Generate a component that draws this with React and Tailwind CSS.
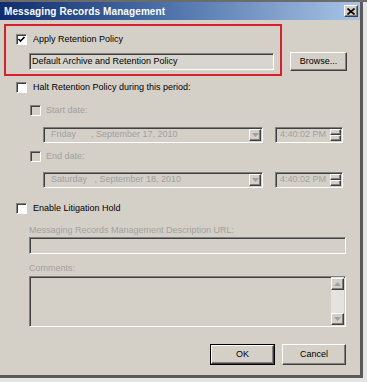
import React from "react";

// Windows-classic "Messaging Records Management" dialog
const FONT = { fontFamily: '"Liberation Sans", Arial, sans-serif' };

function Check({ checked, disabled }) {
  return (
    <span
      className={`relative inline-block w-[11px] h-[11px] shrink-0 border-t border-l border-[#808080] border-b border-r border-b-white border-r-white shadow-[inset_1px_1px_0_#404040] ${disabled ? "bg-[#d4d0c8]" : "bg-white"}`}
    >
      {checked && (
        <svg viewBox="0 0 9 9" className="absolute left-0 top-0 w-[9px] h-[9px]">
          <path d="M1.5 4 L3.5 6 L7.5 2" stroke="#000" strokeWidth="1.6" fill="none" />
        </svg>
      )}
    </span>
  );
}

function Sunken({ className = "", children }) {
  return (
    <div
      className={`border-t border-l border-[#808080] border-b border-r border-b-white border-r-white shadow-[inset_1px_1px_0_#404040] bg-[#d4d0c8] ${className}`}
    >
      {children}
    </div>
  );
}

function Raised({ className = "", children }) {
  return (
    <div
      className={`flex items-center justify-center border-t border-l border-white border-b border-r border-b-[#404040] border-r-[#404040] shadow-[inset_-1px_-1px_0_#808080] bg-[#d4d0c8] ${className}`}
    >
      {children}
    </div>
  );
}

function Arrow({ dir = "down" }) {
  return (
    <svg viewBox="0 0 7 4" className="w-[7px] h-[4px]">
      <path d={dir === "down" ? "M0 0 L7 0 L3.5 4 Z" : "M0 4 L7 4 L3.5 0 Z"} fill="#a0a0a0" />
    </svg>
  );
}

function DateRow({ day }) {
  return (
    <div className="flex items-center ml-[43px] gap-[12px]">
      <Sunken className="w-[220px] h-[16px] flex items-center">
        <span className="flex-1 pl-[7px] text-[#a0a0a0] whitespace-pre">{day}</span>
        <Raised className="w-[12px] h-[12px] mr-[1px]">
          <Arrow />
        </Raised>
      </Sunken>
      <Sunken className="w-[68px] h-[16px] flex items-center">
        <span className="flex-1 pl-[4px] text-[#a0a0a0]">4:40:02 PM</span>
        <div className="flex flex-col mr-[1px]">
          <Raised className="w-[11px] h-[6px]" />
          <Raised className="w-[11px] h-[6px]" />
        </div>
      </Sunken>
    </div>
  );
}

export default function App() {
  return (
    <div className="w-[367px] h-[382px] bg-[#e4e4e4] overflow-hidden text-[9px] text-black" style={FONT}>
      <div className="h-[2px] bg-[#6b6b6b]" />
      <div className="w-[363px] h-[376px] bg-[#d4d0c8] border-r-[3px] border-b-[3px] border-[#5a5a5a] flex flex-col">
        {/* Title bar */}
        <div className="h-[18px] flex items-center justify-between pl-[4px] pr-[2px] bg-[linear-gradient(to_right,#0f2d6e,#4a70a8_45%,#a9c4e6)]">
          <span className="text-white font-bold text-[10px] tracking-[0.1px]">Messaging Records Management</span>
          <Raised className="w-[14px] h-[12px]">
            <svg viewBox="0 0 8 7" className="w-[8px] h-[7px]">
              <path d="M0.5 0.5 L7.5 6.5 M7.5 0.5 L0.5 6.5" stroke="#000" strokeWidth="1.6" />
            </svg>
          </Raised>
        </div>

        {/* Retention policy */}
        <div className="flex items-end mt-[4px] ml-[4px]">
          <div className="w-[278px] h-[52px] border-2 border-[#d8202c] pl-[10px] pt-[8px]">
            <label className="flex items-center gap-[6px] h-[11px]">
              <Check checked />
              <span>Apply Retention Policy</span>
            </label>
            <Sunken className="ml-[13px] mt-[8px] w-[245px] h-[17px] flex items-center pl-[2px] bg-[#d8d5ce]">
              Default Archive and Retention Policy
            </Sunken>
          </div>
          <Raised className="w-[57px] h-[19px] ml-[8px] mb-[5px]">Browse...</Raised>
        </div>

        <label className="flex items-center gap-[6px] h-[11px] ml-[16px] mt-[6px]">
          <Check />
          <span>Halt Retention Policy during this period:</span>
        </label>

        <label className="flex items-center gap-[5px] h-[11px] ml-[30px] mt-[12px]">
          <Check disabled />
          <span className="text-[#a0a0a0]">Start date:</span>
        </label>
        <div className="mt-[11px]">
          <DateRow day={"Friday      , September 17, 2010"} />
        </div>

        <label className="flex items-center gap-[5px] h-[11px] ml-[30px] mt-[8px]">
          <Check disabled />
          <span className="text-[#a0a0a0]">End date:</span>
        </label>
        <div className="mt-[10px]">
          <DateRow day={"Saturday   , September 18, 2010"} />
        </div>

        <label className="flex items-center gap-[6px] h-[11px] ml-[16px] mt-[15px]">
          <Check />
          <span>Enable Litigation Hold</span>
        </label>

        <div className="ml-[29px] mt-[11px] text-[#a0a0a0] leading-[11px]">Messaging Records Management Description URL:</div>
        <Sunken className="ml-[29px] mt-[1px] w-[317px] h-[17px]" />

        <div className="ml-[29px] mt-[9px] text-[#a0a0a0] leading-[11px]">Comments:</div>
        <Sunken className="ml-[29px] mt-[2px] w-[317px] h-[51px] flex justify-end">
          <div className="w-[13px] h-full flex flex-col justify-between bg-[#e6e3de] mr-[1px] py-[1px]">
            <Raised className="w-[13px] h-[12px]">
              <Arrow dir="up" />
            </Raised>
            <Raised className="w-[13px] h-[12px]">
              <Arrow />
            </Raised>
          </div>
        </Sunken>

        <div className="flex justify-end gap-[7px] mr-[14px] mt-[17px]">
          <div className="border border-black">
            <Raised className="w-[63px] h-[19px]">OK</Raised>
          </div>
          <Raised className="w-[64px] h-[21px]">Cancel</Raised>
        </div>
      </div>
    </div>
  );
}
